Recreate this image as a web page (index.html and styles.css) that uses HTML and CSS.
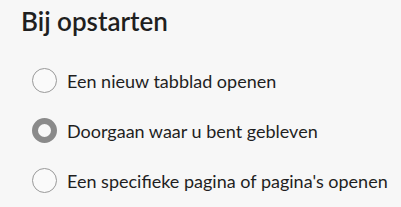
FILE: index.html
```html
<!DOCTYPE html>
<html lang="nl">
<head>
    <meta charset="UTF-8">
    <title>Bij opstarten</title>
    <link rel="stylesheet" href="styles.css">
</head>
<body>

<div class="section">
    <h2>Bij opstarten</h2>

    <div class="options">
        <label class="option">
            <input type="radio" name="startup" value="newtab">
            <span class="radio"></span>
            <span class="text">Een nieuw tabblad openen</span>
        </label>
        <label class="option">
            <input type="radio" name="startup" value="continue" checked>
            <span class="radio"></span>
            <span class="text">Doorgaan waar u bent gebleven</span>
        </label>
        <label class="option">
            <input type="radio" name="startup" value="pages">
            <span class="radio"></span>
            <span class="text">Een specifieke pagina of pagina's openen</span>
        </label>
    </div>
</div>

</body>
</html>
```

FILE: styles.css
```css
body {
    margin: 0;
    background-color: #f7f7f7;
    font-family: Lato, "Open Sans", Arial, sans-serif;
    color: #1f1f1f;
}
.section {
    padding: 4px 0 4px 21px;
}
h2 {
    margin: 0 0 30px 0;
    font-size: 26px;
    font-weight: 600;
    line-height: 34px;
}
.options {
    display: flex;
    flex-direction: column;
    gap: 25px;
    padding-left: 11px;
}
.option {
    display: flex;
    align-items: center;
    gap: 10px;
    font-size: 18px;
    line-height: 24px;
    white-space: nowrap;
    cursor: pointer;
}
.option input {
    display: none;
}
.radio {
    width: 23px;
    height: 23px;
    border: 1px solid #999;
    border-radius: 50%;
    background-color: #fafafa;
    flex-shrink: 0;
}
.option input:checked + .radio {
    width: 13px;
    height: 13px;
    border: 6px solid #8a8a8a;
    background-color: #f7f7f7;
}
```
